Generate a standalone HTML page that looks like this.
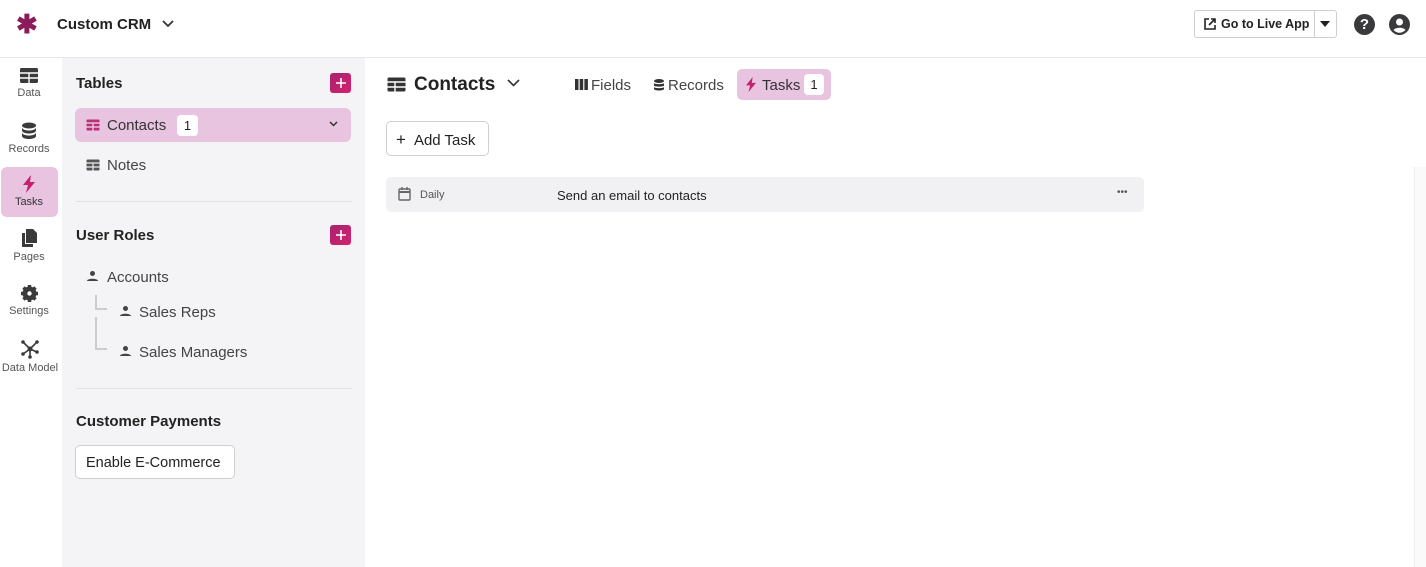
<!DOCTYPE html>
<html><head><style>
*{box-sizing:border-box;margin:0;padding:0}
body{width:1426px;height:567px;overflow:hidden;background:#fff;font-family:"Liberation Sans",sans-serif;color:#222;position:relative}
.a{position:absolute}
.top{left:0;top:0;width:1426px;height:58px;border-bottom:1px solid #e6e6e8}
.nav{text-align:center;width:58px;left:0;font-size:11px;color:#555}
.nav svg{display:block;margin:0 auto 3px}
.panel{left:62px;top:58px;width:303px;height:509px;background:#f4f4f6}
.h{font-size:15px;font-weight:bold;color:#222}
.plus{width:21px;height:20px;border-radius:3px;background:linear-gradient(135deg,#a8236e,#d4216e);display:flex;align-items:center;justify-content:center}
.it{font-size:15px;color:#444}
.badge{background:#fff;border-radius:4px;font-size:13px;text-align:center;color:#222}
.sep{height:1px;background:#e2e2e4;width:276px;left:76px}
.btn{border:1px solid #cfcfd2;border-radius:5px;background:#fff;font-size:15px;color:#222}
</style></head><body>
<div class="a top"></div>
<div class="a" style="left:16px;top:12px;font-size:26px;font-weight:bold;color:#8a1c5c;line-height:24px">✱</div>
<div class="a" style="left:57px;top:16px;font-size:15px;font-weight:bold">Custom CRM</div>
<svg class="a" style="left:161px;top:17px" width="14" height="14" viewBox="0 0 14 14"><path d="M2 4l5 5 5-5" stroke="#333" stroke-width="1.8" fill="none"/></svg>
<div class="a btn" style="left:1194px;top:10px;width:143px;height:28px;border-radius:3px"></div>
<div class="a" style="left:1314px;top:10px;width:1px;height:28px;background:#cfcfd2"></div>
<svg class="a" style="left:1203px;top:17px" width="14" height="14" viewBox="0 0 14 14"><path d="M6 2H2v10h10V8M8 2h4v4M12 2L6 8" stroke="#222" stroke-width="1.6" fill="none"/></svg>
<div class="a" style="left:1221px;top:17px;font-size:12.5px;font-weight:bold">Go to Live App</div>
<svg class="a" style="left:1320px;top:21px" width="10" height="6"><path d="M0 0h10L5 6z" fill="#222"/></svg>
<div class="a" style="left:1354px;top:14px;width:21px;height:21px;border-radius:50%;background:#3a3a3c;color:#fff;font-weight:bold;font-size:15px;text-align:center;line-height:21px">?</div>
<svg class="a" style="left:1389px;top:14px" width="21" height="21" viewBox="0 0 21 21"><circle cx="10.5" cy="10.5" r="10.5" fill="#3a3a3c"/><circle cx="10.5" cy="8" r="3.5" fill="#fff"/><path d="M4.5 16c2-3 10-3 12 0c-2 2-4 2.8-6 2.8s-4-.8-6-2.8z" fill="#fff"/></svg>

<div class="a nav" style="top:67px"><svg width="20" height="17" viewBox="0 0 20 17"><rect x="1" y="1" width="18" height="15" rx="1.5" fill="#3a3a3c"/><path d="M1 6h18M1 11h18M10 6v10" stroke="#fff" stroke-width="1.4"/></svg>Data</div>
<div class="a nav" style="top:122px"><svg width="16" height="18" viewBox="0 0 16 18"><ellipse cx="8" cy="3.5" rx="7" ry="3" fill="#3a3a3c"/><path d="M1 5.5v3c0 1.7 3 3 7 3s7-1.3 7-3v-3c0 1.7-3 3-7 3s-7-1.3-7-3zM1 10.5v3.5c0 1.7 3 3 7 3s7-1.3 7-3v-3.5c0 1.7-3 3-7 3s-7-1.3-7-3z" fill="#3a3a3c"/></svg>Records</div>
<div class="a" style="left:1px;top:167px;width:57px;height:50px;border-radius:6px;background:#e8c4e0"></div>
<div class="a nav" style="top:175px;color:#333"><svg width="14" height="18" viewBox="0 0 14 18"><path d="M9 0L1 10h5l-2 8 9-11H8z" fill="#c4226e"/></svg>Tasks</div>
<div class="a nav" style="top:229px"><svg width="16" height="19" viewBox="0 0 16 19"><path d="M5 0h7l4 4v10H5z" fill="#3a3a3c"/><path d="M1 4h3v11h8v3H1z" fill="#3a3a3c"/></svg>Pages</div>
<div class="a nav" style="top:285px"><svg width="17" height="17" viewBox="0 0 17 17"><circle cx="8.5" cy="8.5" r="5.5" fill="none" stroke="#3a3a3c" stroke-width="3"/><path d="M8.5 0v17M0 8.5h17M2.5 2.5l12 12M14.5 2.5l-12 12" stroke="#3a3a3c" stroke-width="3.5"/><circle cx="8.5" cy="8.5" r="2.2" fill="#fff"/></svg>Settings</div>
<div class="a nav" style="top:339px;width:60px"><svg width="20" height="20" viewBox="0 0 20 20"><path d="M3 3l7 7 7-7M10 10l-7 5M10 10v8M10 10l7 3" stroke="#3a3a3c" stroke-width="1.6" fill="none"/><circle cx="10" cy="10" r="2.5" fill="#3a3a3c"/><circle cx="3" cy="3" r="1.8" fill="#3a3a3c"/><circle cx="17" cy="3" r="1.8" fill="#3a3a3c"/><circle cx="3" cy="15" r="1.8" fill="#3a3a3c"/><circle cx="10" cy="18" r="1.8" fill="#3a3a3c"/><circle cx="17" cy="13" r="1.8" fill="#3a3a3c"/></svg>Data Model</div>

<div class="a panel"></div>
<div class="a h" style="left:76px;top:75px">Tables</div>
<div class="a plus" style="left:330px;top:73px"><svg width="10" height="10"><path d="M5 0v10M0 5h10" stroke="#fff" stroke-width="1.6"/></svg></div>
<div class="a" style="left:75px;top:108px;width:276px;height:34px;border-radius:6px;background:#e8c4e0"></div>
<svg class="a" style="left:86px;top:119px" width="14" height="12" viewBox="0 0 14 12"><rect x="0.5" y="0.5" width="13" height="11" rx="1" fill="#b8327a"/><path d="M0 4h14M0 8h14M7 4v8" stroke="#f4d8ea" stroke-width="1.2"/></svg>
<div class="a it" style="left:107px;top:117px;color:#333">Contacts</div>
<div class="a badge" style="left:177px;top:115px;width:21px;height:21px;line-height:21px">1</div>
<svg class="a" style="left:329px;top:121px" width="9" height="7"><path d="M1 1l3.5 3.5L8 1" stroke="#333" stroke-width="1.5" fill="none"/></svg>
<svg class="a" style="left:86px;top:159px" width="14" height="12" viewBox="0 0 14 12"><rect x="0.5" y="0.5" width="13" height="11" rx="1" fill="#555"/><path d="M0 4h14M0 8h14M7 4v8" stroke="#eee" stroke-width="1.2"/></svg>
<div class="a it" style="left:107px;top:157px">Notes</div>
<div class="a sep" style="top:201px"></div>
<div class="a h" style="left:76px;top:227px">User Roles</div>
<div class="a plus" style="left:330px;top:225px"><svg width="10" height="10"><path d="M5 0v10M0 5h10" stroke="#fff" stroke-width="1.6"/></svg></div>
<svg class="a" style="left:87px;top:271px" width="11" height="10"><circle cx="5.5" cy="2.5" r="2.5" fill="#444"/><path d="M0 10c0-3 11-3 11 0z" fill="#444"/></svg>
<div class="a it" style="left:107px;top:269px">Accounts</div>
<div class="a" style="left:95px;top:295px;width:12px;height:15px;border-left:2px solid #ccc;border-bottom:2px solid #ccc"></div>
<div class="a" style="left:95px;top:317px;width:12px;height:33px;border-left:2px solid #ccc;border-bottom:2px solid #ccc"></div>
<svg class="a" style="left:120px;top:306px" width="11" height="10"><circle cx="5.5" cy="2.5" r="2.5" fill="#444"/><path d="M0 10c0-3 11-3 11 0z" fill="#444"/></svg>
<div class="a it" style="left:139px;top:304px">Sales Reps</div>
<svg class="a" style="left:120px;top:346px" width="11" height="10"><circle cx="5.5" cy="2.5" r="2.5" fill="#444"/><path d="M0 10c0-3 11-3 11 0z" fill="#444"/></svg>
<div class="a it" style="left:139px;top:344px">Sales Managers</div>
<div class="a sep" style="top:388px"></div>
<div class="a h" style="left:76px;top:413px">Customer Payments</div>
<div class="a btn" style="left:75px;top:445px;width:160px;height:34px;padding:9px 0 0 10px;font-size:14.5px">Enable E-Commerce</div>

<svg class="a" style="left:387px;top:77px" width="19" height="15" viewBox="0 0 19 15"><rect x="0.5" y="0.5" width="18" height="14" rx="1.5" fill="#333"/><path d="M0 5h19M0 10h19M8 5v10" stroke="#fff" stroke-width="1.4"/></svg>
<div class="a" style="left:414px;top:74px;font-size:19px;font-weight:bold">Contacts</div>
<svg class="a" style="left:507px;top:78px" width="13" height="10"><path d="M1 2l5.5 5.5L12 2" stroke="#333" stroke-width="1.6" fill="none"/></svg>
<svg class="a" style="left:575px;top:79px" width="13" height="11"><rect x="0" y="0" width="3.5" height="11" fill="#333"/><rect x="4.7" y="0" width="3.5" height="11" fill="#333"/><rect x="9.4" y="0" width="3.5" height="11" fill="#333"/></svg>
<div class="a" style="left:591px;top:77px;font-size:15px;color:#444">Fields</div>
<svg class="a" style="left:654px;top:79px" width="10" height="12" viewBox="0 0 10 12"><ellipse cx="5" cy="2" rx="5" ry="2" fill="#333"/><path d="M0 4c0 1.5 10 1.5 10 0v2.5c0 1.5-10 1.5-10 0zM0 8c0 1.5 10 1.5 10 0v2c0 2-10 2-10 0z" fill="#333"/></svg>
<div class="a" style="left:668px;top:77px;font-size:15px;color:#444">Records</div>
<div class="a" style="left:737px;top:69px;width:94px;height:31px;border-radius:5px;background:#e8c4e0"></div>
<svg class="a" style="left:745px;top:77px" width="12" height="15" viewBox="0 0 14 18"><path d="M9 0L1 10h5l-2 8 9-11H8z" fill="#c4226e"/></svg>
<div class="a" style="left:762px;top:77px;font-size:15px;color:#333">Tasks</div>
<div class="a badge" style="left:804px;top:74px;width:20px;height:21px;line-height:21px">1</div>
<div class="a btn" style="left:386px;top:121px;width:103px;height:35px;padding:8px 0 0 9px"><span style="font-size:17px;margin-right:8px">+</span>Add Task</div>
<div class="a" style="left:386px;top:177px;width:758px;height:35px;border-radius:5px;background:#f1f1f4"></div>
<svg class="a" style="left:398px;top:187px" width="13" height="14" viewBox="0 0 13 14"><rect x="1" y="2" width="11" height="11" rx="1" fill="none" stroke="#666" stroke-width="1.4"/><path d="M1 5h11" stroke="#666" stroke-width="2"/><path d="M4 0v3M9 0v3" stroke="#666" stroke-width="1.4"/></svg>
<div class="a" style="left:420px;top:189px;font-size:11px;color:#555">Daily</div>
<div class="a" style="left:557px;top:188px;font-size:13px;color:#222">Send an email to contacts</div>
<div class="a" style="left:1117px;top:187px;font-size:10px;color:#555;letter-spacing:0px">•••</div>
<div class="a" style="left:1414px;top:167px;width:12px;height:400px;background:#fafafa;border-left:1px solid #eee"></div>
</body></html>
